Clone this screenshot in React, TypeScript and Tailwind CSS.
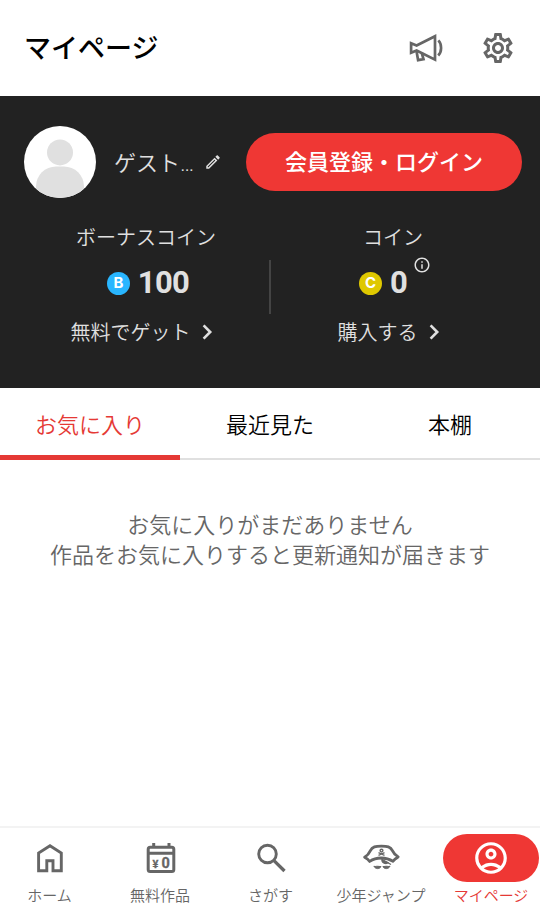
import type { ReactNode } from "react";
import {
  MdInfoOutline,
  MdOutlineAccountCircle,
  MdOutlineEdit,
  MdOutlineSettings,
} from "react-icons/md";

function MegaphoneIcon() {
  return (
    <svg width="36" height="36" viewBox="0 0 36 36" fill="none" stroke="currentColor" strokeWidth="2.7">
      <path d="M3.1 13.2 8.6 15.4 27 6.2V29.6L8.6 20.5 3.1 22.7Z" />
      <path d="M8.5 21 10.1 30.2 15.5 29.2 13.6 22.4" />
      <path d="M30.4 10.4C34 14 34 21.8 30.2 25.5" />
    </svg>
  );
}

function HomeIcon() {
  return (
    <svg width="40" height="40" viewBox="-1 0 40 40" fill="none" stroke="currentColor" strokeWidth="2.9">
      <path d="M8.6 32.8V15L20 7.7 31.3 15V32.8H23V22.8H16.8V32.8Z" />
    </svg>
  );
}

function FreeIcon() {
  return (
    <svg width="40" height="40" viewBox="-1 0 40 40">
      <g fill="none" stroke="currentColor" strokeWidth="3">
        <rect x="7.2" y="9.3" width="25.6" height="24.2" rx="2" />
        <path d="M7 15.3H33M12.7 5V10M28 5V10" />
      </g>
      <g fill="currentColor" className="font-bold">
        <text x="11.6" y="29.6" fontSize="11" stroke="currentColor" strokeWidth=".3">¥</text>
        <text x="20.4" y="30.2" fontSize="14.5" stroke="currentColor" strokeWidth=".3">0</text>
      </g>
    </svg>
  );
}

function SearchIcon() {
  return (
    <svg width="40" height="40" viewBox="-.7 0 40 40" fill="none" stroke="currentColor" strokeWidth="2.9">
      <circle cx="16.8" cy="16" r="8.8" />
      <path d="M23 22.3 33.8 33" strokeWidth="3.3" />
    </svg>
  );
}

function PirateIcon() {
  return (
    <svg width="40" height="40" viewBox="0 0 40 40" fill="none" stroke="currentColor">
      <path
        d="M3.6 19.2C6.4 17.6 8 15.6 9.4 12.6 11.2 8.6 14.6 8.1 20.4 8.1S29.6 8.6 31.4 12.6C32.8 15.6 34.4 17.3 37.2 18.9 34.8 20.3 33.4 21.1 32 23.3 25 18.9 15.3 18.9 8.7 23.4 7.3 21.2 5.9 20.4 3.6 19.2Z"
        strokeWidth="2.8"
        strokeLinejoin="round"
      />
      <path d="M17.5 14.6 23.5 17.4M23.5 14.6 17.5 17.4" strokeWidth="1.2" />
      <circle cx="20.5" cy="12.6" r="1.4" strokeWidth="1.4" />
      <path d="M19.5 20.6 30 26.6M20.9 21.4C20.4 25.4 25.3 26.4 27.2 24.6Z" fill="currentColor" strokeWidth="1.2" />
      <path
        d="M12.9 28.2C14.4 29 15.4 28 16.9 28.3L20 28.6C18.8 31.3 14.4 31.4 12.9 28.2ZM29 28.2C27.6 29 26.5 28 25 28.3L21.9 28.6C23.1 31.3 27.6 31.4 29 28.2Z"
        fill="currentColor"
        strokeWidth="1"
      />
    </svg>
  );
}

function Avatar() {
  return (
    <div className="size-[72px] shrink-0 overflow-hidden rounded-full bg-white">
      <svg width="72" height="72" viewBox="0 0 72 72" fill="#e0e0e0">
        <circle cx="36" cy="26.4" r="13" />
        <rect x="12" y="40.4" width="48" height="50" rx="20" />
      </svg>
    </div>
  );
}

function Chevron() {
  return (
    <svg
      className="-mt-[3px]"
      width="12"
      height="18"
      viewBox="0 0 12 18"
      fill="none"
      stroke="currentColor"
      strokeWidth="2.6"
    >
      <path d="M1.6 2.4 8.2 9 1.6 15.6" />
    </svg>
  );
}

type CoinProps = {
  label: string;
  mark: string;
  markClass: string;
  amount: number;
  action: string;
  info?: boolean;
};

function Coin({ label, mark, markClass, amount, action, info }: CoinProps) {
  return (
    <div className="flex flex-1 flex-col items-center">
      <p className="pt-px pr-px text-[20px] leading-[30px]">{label}</p>
      <div className="mt-[15px] flex h-[30px] items-center pl-[3px]">
        <span
          className={`mr-2 flex size-[23px] items-center justify-center rounded-full font-[Inter] text-[15px] font-bold text-white ${markClass}`}
        >
          {mark}
        </span>
        <span className="text-[31px] font-bold leading-[30px] tracking-[-0.7px]">{amount}</span>
        {info && <MdInfoOutline className="-mt-9 ml-[6px] size-[18px]" />}
      </div>
      <button className="mt-5 flex items-center gap-[11px] pr-[9px] text-[20px] leading-[30px]">
        {action}
        <Chevron />
      </button>
    </div>
  );
}

const tabs = ["お気に入り", "最近見た", "本棚"];

const navItems: { label: string; icon: ReactNode; active?: boolean }[] = [
  { label: "ホーム", icon: <HomeIcon /> },
  { label: "無料作品", icon: <FreeIcon /> },
  { label: "さがす", icon: <SearchIcon /> },
  { label: "少年ジャンプ", icon: <PirateIcon /> },
  { label: "マイページ", icon: <MdOutlineAccountCircle className="size-[38px]" />, active: true },
];

export default function App() {
  return (
    <div
      lang="ja"
      className="flex h-[924px] w-[540px] flex-col overflow-hidden bg-white font-['Roboto','Noto_Sans_CJK_JP',sans-serif] font-[350]"
    >
      <header className="flex h-24 items-center justify-between px-6">
        <h1 className="pt-[3px] text-[27px] font-medium text-black">マイページ</h1>
        <div className="flex gap-9 text-[#666]">
          <MegaphoneIcon />
          <MdOutlineSettings className="size-9" />
        </div>
      </header>

      <section className="h-[292px] bg-[#222] pt-[30px] text-[#e0e0e0]">
        <div className="flex items-center pl-6 pr-[18px]">
          <Avatar />
          <p className="ml-[18px] w-[90px] pt-[2px] text-[22px]">ゲスト…</p>
          <MdOutlineEdit className="size-[18px]" />
          <button className="ml-auto h-[58px] w-[276px] rounded-full bg-[#ef3734] pt-px text-[22px] font-medium text-white">
            会員登録・ログイン
          </button>
        </div>
        <div className="mt-6 flex px-6">
          <Coin label="ボーナスコイン" mark="B" markClass="bg-[#29b6ff]" amount={100} action="無料でゲット" />
          <div className="mt-[38px] h-[54px] w-[2px] bg-[#444]" />
          <Coin label="コイン" mark="C" markClass="bg-[#dfc800]" amount={0} action="購入する" info />
        </div>
      </section>

      <div className="grid h-[72px] grid-cols-3 text-[22px]">
        {tabs.map((tab, i) => (
          <button
            key={tab}
            className={
              i === 0
                ? "border-b-[5px] border-[#e53935] pt-[7px] text-[#e53935]"
                : "border-b-2 border-[#e0e0e0] pt-1 text-black"
            }
          >
            {tab}
          </button>
        ))}
      </div>

      <main className="flex-1 pt-[51px] text-center text-[22px] leading-[30px] text-[#666]">
        <p>お気に入りがまだありません</p>
        <p>作品をお気に入りすると更新通知が届きます</p>
      </main>

      <nav className="flex h-[98px] justify-between border-t-2 border-[#f3f3f3] px-px pt-[6px]">
        {navItems.map((item) => (
          <a
            key={item.label}
            className={`flex w-24 flex-col items-center ${item.active ? "text-[#e53935]" : "text-[#666]"}`}
          >
            <span
              className={`flex h-12 w-24 items-center justify-center rounded-full ${item.active ? "bg-[#ef3734] text-white" : ""}`}
            >
              {item.icon}
            </span>
            <span className={`mt-1 whitespace-nowrap text-[15px] leading-5 ${item.active ? "" : "pl-px"}`}>
              {item.label}
            </span>
          </a>
        ))}
      </nav>
    </div>
  );
}
